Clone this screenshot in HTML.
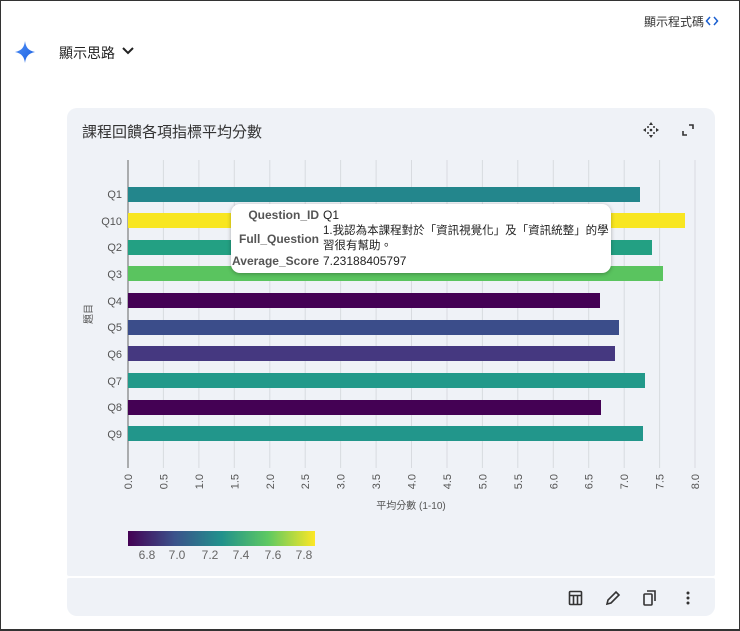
<!DOCTYPE html>
<html><head><meta charset="utf-8"><style>
body{margin:0;width:740px;height:631px;overflow:hidden;background:#fff;font-family:"Liberation Sans","Noto Sans CJK TC",sans-serif;}
.frame{position:absolute;left:0;top:0;width:738px;height:628px;border:1px solid #333;border-bottom:2px solid #333;}
.t{position:absolute;white-space:nowrap;}
</style></head><body>
<div class="frame"></div>
<div class="t" style="left:644px;top:13px;font-size:12px;color:#333">顯示程式碼</div>
<svg style="position:absolute;left:705px;top:15px" width="14" height="12" viewBox="0 0 14 12" fill="none" stroke="#1a5fd0" stroke-width="1.5"><path d="M5 2L1.5 6 5 10M9 2l3.5 4L9 10"/></svg>
<svg style="position:absolute;left:13px;top:40px" width="24" height="24" viewBox="0 0 24 24"><defs><linearGradient id="g" x1="0" y1="0" x2="1" y2="1"><stop offset="0" stop-color="#4f8ff7"/><stop offset="1" stop-color="#1a5fe0"/></linearGradient></defs><path d="M12 1C12.8 7 15 10.5 22 12C15 13.5 12.8 17 12 23C11.2 17 9 13.5 2 12C9 10.5 11.2 7 12 1Z" fill="url(#g)"/></svg>
<div class="t" style="left:59px;top:43px;font-size:14px;color:#222">顯示思路</div>
<svg style="position:absolute;left:121px;top:45px" width="14" height="12" viewBox="0 0 14 12"><path d="M2 3l5 5 5-5" stroke="#222" stroke-width="2" fill="none"/></svg>

<div style="position:absolute;left:67px;top:108px;width:648px;height:468px;background:#eff2f7;border-radius:10px 10px 2px 2px"></div>
<div style="position:absolute;left:67px;top:578px;width:648px;height:38px;background:#eff2f7;border-radius:2px 2px 10px 10px"></div>
<div class="t" style="left:82px;top:121px;font-size:15px;color:#333">課程回饋各項指標平均分數</div>
<svg style="position:absolute;left:642px;top:121px" width="18" height="18" viewBox="0 0 18 18" fill="#333"><path d="M9 1l2 3H7zM9 17l2-3H7zM1 9l3 2V7zM17 9l-3 2V7z"/><circle cx="9" cy="9" r="1.3"/><circle cx="6" cy="6" r="1"/><circle cx="12" cy="6" r="1"/><circle cx="6" cy="12" r="1"/><circle cx="12" cy="12" r="1"/></svg>
<svg style="position:absolute;left:681px;top:123px" width="14" height="14" viewBox="0 0 14 14" fill="none" stroke="#333" stroke-width="1.6"><path d="M8 2h4v4M6 12H2V8"/></svg>

<svg style="position:absolute;left:0;top:0" width="740" height="631">
<g stroke="#d8dbe0" stroke-width="1">
<line x1="163.4" y1="160" x2="163.4" y2="468"/><line x1="198.9" y1="160" x2="198.9" y2="468"/><line x1="234.3" y1="160" x2="234.3" y2="468"/><line x1="269.8" y1="160" x2="269.8" y2="468"/><line x1="305.2" y1="160" x2="305.2" y2="468"/><line x1="340.6" y1="160" x2="340.6" y2="468"/><line x1="376.1" y1="160" x2="376.1" y2="468"/><line x1="411.5" y1="160" x2="411.5" y2="468"/><line x1="447" y1="160" x2="447" y2="468"/><line x1="482.4" y1="160" x2="482.4" y2="468"/><line x1="517.8" y1="160" x2="517.8" y2="468"/><line x1="553.3" y1="160" x2="553.3" y2="468"/><line x1="588.7" y1="160" x2="588.7" y2="468"/><line x1="624.2" y1="160" x2="624.2" y2="468"/><line x1="659.6" y1="160" x2="659.6" y2="468"/><line x1="695" y1="160" x2="695" y2="468"/>
</g>
<line x1="128" y1="160" x2="128" y2="468" stroke="#666"/>
<rect x="128" y="187" width="512" height="15" fill="#23868c"/>
<rect x="128" y="213" width="557" height="15" fill="#f8e621"/>
<rect x="128" y="240" width="524" height="15" fill="#23a083"/>
<rect x="128" y="266" width="535" height="15" fill="#5ac45f"/>
<rect x="128" y="293" width="472" height="15" fill="#440154"/>
<rect x="128" y="320" width="491" height="15" fill="#3b4d8a"/>
<rect x="128" y="346" width="487" height="15" fill="#453880"/>
<rect x="128" y="373" width="517" height="15" fill="#22998a"/>
<rect x="128" y="400" width="473" height="15" fill="#440154"/>
<rect x="128" y="426" width="515" height="15" fill="#22968b"/>
<g font-family="Liberation Sans" font-size="11" fill="#555" text-anchor="end">
<text x="122" y="198">Q1</text><text x="122" y="225">Q10</text><text x="122" y="251">Q2</text><text x="122" y="278">Q3</text><text x="122" y="305">Q4</text><text x="122" y="331">Q5</text><text x="122" y="358">Q6</text><text x="122" y="385">Q7</text><text x="122" y="411">Q8</text><text x="122" y="438">Q9</text>
</g>
<g font-family="Liberation Sans" font-size="11" fill="#555" text-anchor="end">
<text transform="translate(132,474) rotate(-90)">0.0</text><text transform="translate(167.4,474) rotate(-90)">0.5</text><text transform="translate(202.9,474) rotate(-90)">1.0</text><text transform="translate(238.3,474) rotate(-90)">1.5</text><text transform="translate(273.8,474) rotate(-90)">2.0</text><text transform="translate(309.2,474) rotate(-90)">2.5</text><text transform="translate(344.6,474) rotate(-90)">3.0</text><text transform="translate(380.1,474) rotate(-90)">3.5</text><text transform="translate(415.5,474) rotate(-90)">4.0</text><text transform="translate(451,474) rotate(-90)">4.5</text><text transform="translate(486.4,474) rotate(-90)">5.0</text><text transform="translate(521.8,474) rotate(-90)">5.5</text><text transform="translate(557.3,474) rotate(-90)">6.0</text><text transform="translate(592.7,474) rotate(-90)">6.5</text><text transform="translate(628.2,474) rotate(-90)">7.0</text><text transform="translate(663.6,474) rotate(-90)">7.5</text><text transform="translate(699,474) rotate(-90)">8.0</text>
</g>
<text x="411" y="509" text-anchor="middle" font-family="Liberation Sans,Noto Sans CJK TC" font-size="10" fill="#555">平均分數 (1-10)</text>
<text transform="translate(92,314) rotate(-90)" text-anchor="middle" font-family="Noto Sans CJK TC" font-size="10" fill="#555">題目</text>
<defs><linearGradient id="v"><stop offset="0" stop-color="#440154"/><stop offset=".25" stop-color="#3b528b"/><stop offset=".5" stop-color="#21918c"/><stop offset=".75" stop-color="#5ec962"/><stop offset="1" stop-color="#fde725"/></linearGradient></defs>
<rect x="128" y="531" width="187" height="15" fill="url(#v)"/>
<g font-family="Liberation Sans" font-size="12" fill="#666" text-anchor="middle"><text x="147" y="559">6.8</text><text x="177" y="559">7.0</text><text x="210" y="559">7.2</text><text x="241" y="559">7.4</text><text x="273" y="559">7.6</text><text x="304" y="559">7.8</text></g>
</svg>

<div style="position:absolute;left:231px;top:204px;width:380px;height:69px;background:#fff;border-radius:9px;box-shadow:0 1px 4px rgba(0,0,0,.3)"></div>
<div class="t" style="left:231px;top:208px;width:88px;text-align:right;font-size:12px;font-weight:bold;color:#555">Question_ID</div>
<div class="t" style="left:323px;top:208px;font-size:12px;color:#222">Q1</div>
<div class="t" style="left:231px;top:232px;width:88px;text-align:right;font-size:12px;font-weight:bold;color:#555">Full_Question</div>
<div class="t" style="left:323px;top:224px;font-size:11.5px;color:#222;line-height:15px">1.我認為本課程對於「資訊視覺化」及「資訊統整」的學<br>習很有幫助。</div>
<div class="t" style="left:231px;top:254px;width:88px;text-align:right;font-size:12px;font-weight:bold;color:#555">Average_Score</div>
<div class="t" style="left:323px;top:254px;font-size:12px;color:#222">7.23188405797</div>

<svg style="position:absolute;left:567px;top:589px" width="130" height="18" viewBox="0 0 130 18" fill="none" stroke="#333" stroke-width="1.6">
<rect x="2.5" y="2.5" width="12" height="13" rx="1"/><path d="M2.5 6.5h12M6.5 6.5v9M10.5 6.5v9"/>
<path d="M40 15l1-4 8-8 3 3-8 8z"/>
<rect x="77" y="5" width="8" height="11" rx="1"/><path d="M80 2h8v10"/>
<g fill="#333" stroke="none"><circle cx="121" cy="4" r="1.5"/><circle cx="121" cy="9" r="1.5"/><circle cx="121" cy="14" r="1.5"/></g>
</svg>
</body></html>
